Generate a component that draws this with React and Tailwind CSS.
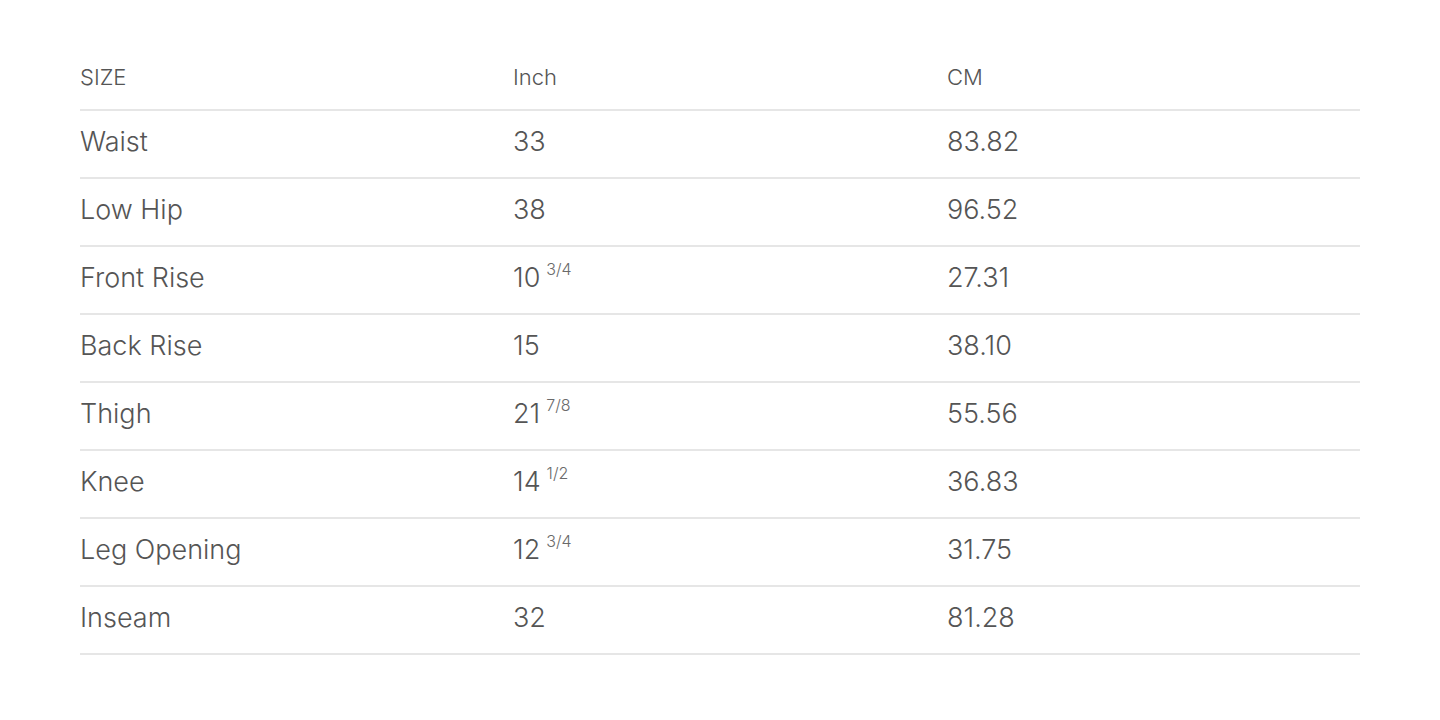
export default function App() {
  const rows = [
    ["Waist", "33", null, "83.82"],
    ["Low Hip", "38", null, "96.52"],
    ["Front Rise", "10", "3/4", "27.31"],
    ["Back Rise", "15", null, "38.10"],
    ["Thigh", "21", "7/8", "55.56"],
    ["Knee", "14", "1/2", "36.83"],
    ["Leg Opening", "12", "3/4", "31.75"],
    ["Inseam", "32", null, "81.28"],
  ];
  return (
    <div className="w-[1440px] h-[720px] bg-white px-[80px] pt-[59px] text-[#555555] font-light" style={{ fontFamily: "Inter, 'Open Sans', sans-serif" }}>
      <div className="grid grid-cols-[433px_434px_1fr] h-[52px] border-b-2 border-[#e6e6e6] text-[22px] items-start pt-[2px]">
        <div>SIZE</div>
        <div>Inch</div>
        <div>CM</div>
      </div>
      {rows.map((r) => (
        <div key={r[0]} className="grid grid-cols-[433px_434px_1fr] h-[68px] border-b-2 border-[#e6e6e6] text-[27px] items-center pb-[4px]">
          <div>{r[0]}</div>
          <div className="flex items-start">
            <span>{r[1]}</span>
            <span className="text-[16px] ml-[6px] -mt-[1px] text-[#6a6a6a]">{r[2]}</span>
          </div>
          <div>{r[3]}</div>
        </div>
      ))}
    </div>
  );
}
